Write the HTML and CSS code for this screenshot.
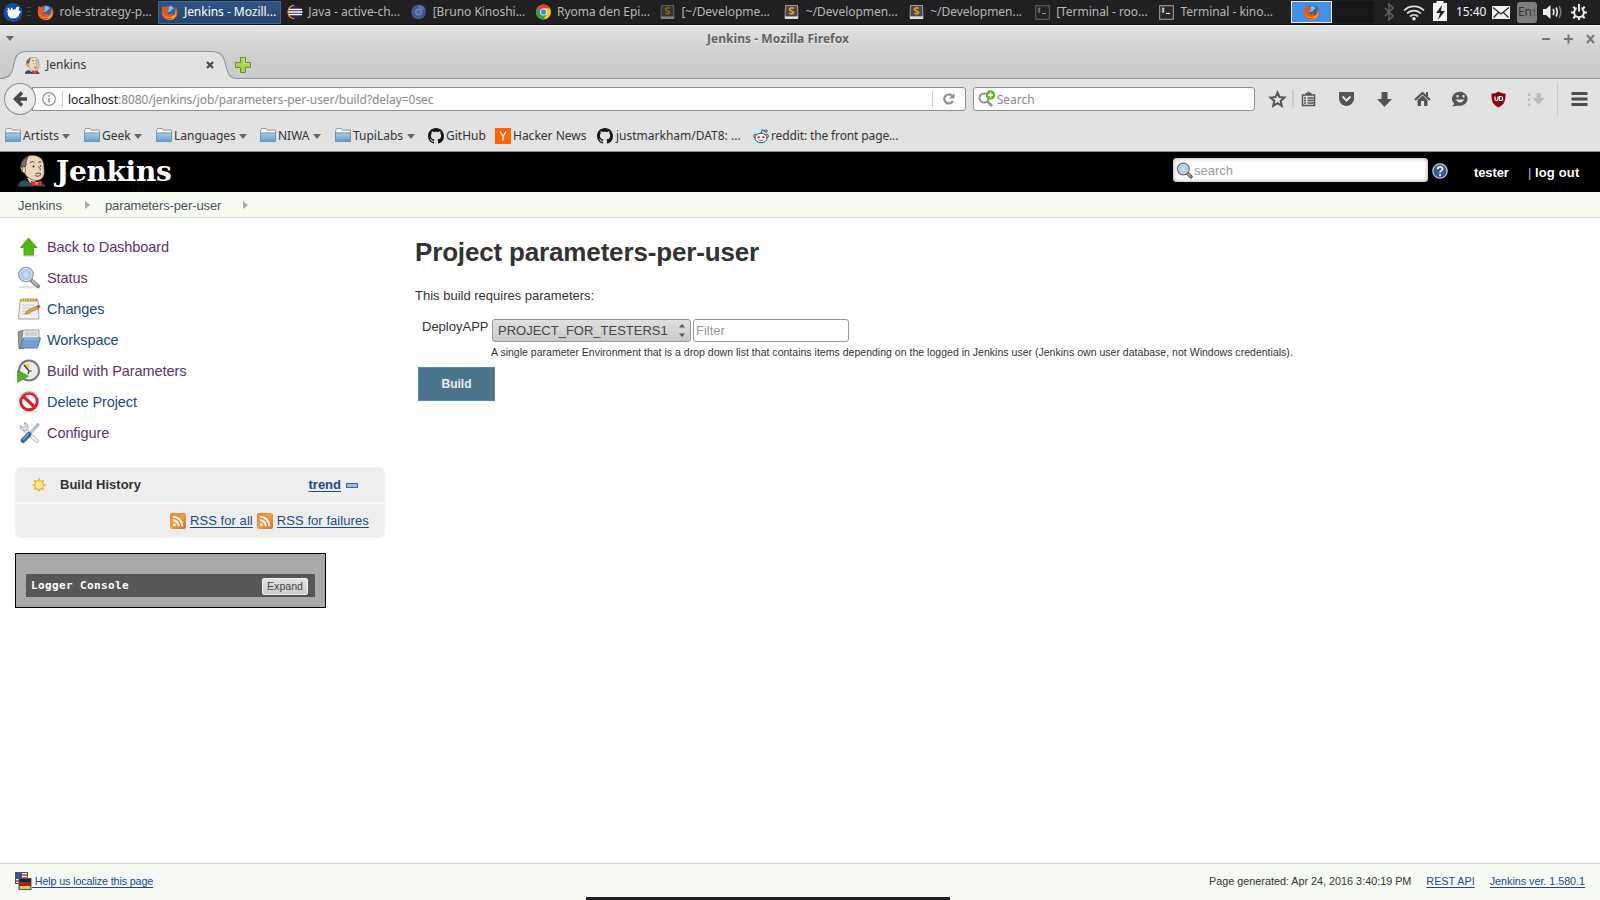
FILE: index.html
```html
<!DOCTYPE html>
<html lang="en">
<head>
<meta charset="utf-8">
<title>Jenkins</title>
<link rel="stylesheet" href="styles.css">
</head>
<body>
<svg class="defs" width="0" height="0">
  <defs>
    <linearGradient id="fold" x1="0" y1="0" x2="0" y2="1"><stop offset="0" stop-color="#a9cfe8"/><stop offset="1" stop-color="#5d9cc9"/></linearGradient>
    <linearGradient id="rssg" x1="0" y1="0" x2="1" y2="1"><stop offset="0" stop-color="#e8803a"/><stop offset=".5" stop-color="#f79a3c"/><stop offset="1" stop-color="#dc6b28"/></linearGradient>
    <linearGradient id="greeng" x1="0" y1="0" x2="0" y2="1"><stop offset="0" stop-color="#4fae1a"/><stop offset="1" stop-color="#58c800"/></linearGradient>
    <radialGradient id="lens"><stop offset="0" stop-color="#d8e9fb"/><stop offset="1" stop-color="#86b0e4"/></radialGradient>
    <radialGradient id="sung"><stop offset="0" stop-color="#fffbd0"/><stop offset="1" stop-color="#ffe04c"/></radialGradient>
  </defs>
  <symbol id="firefox" viewBox="0 0 17 17">
    <circle cx="9" cy="8.2" r="7" fill="#2f62ad"/><path d="M8 2c3 0 4 1 5 3-2-1-2 1-3 2s-3 0-4 2z" fill="#7fc0e8"/>
    <path d="M1.2 1.8 C2 3 3 3 4.2 3 C5 2.3 6 2 7.2 2.2 C6.5 3 6.3 3.8 6.8 4.5 C8 4.6 8.5 5 8.3 5.8 C7.3 6.3 6.8 6.8 6.6 7.6 C5.7 8.3 6 9.7 7.2 10.2 C8.8 11 10 9.6 11.2 9.8 C12.2 10 12 11 11 11.6 C13.8 11.3 14.6 8 13.6 5.6 C15.2 6.3 15.1 3.6 13 2 C16.3 4 17.2 7.6 16 11.2 C14.4 15.4 10.5 17 7 16 C2.8 15 .4 11.6 .8 7.4 C.9 5 1.4 4 1.2 1.8Z" fill="#e3571c"/>
    <path d="M1.5 8.2c1 3.2 4 5.4 7.5 4.9 4-.4 6-3.6 5.7-7 1.7 4 .4 8-3.4 9.1C6 16.4 1.9 13.4 1.5 8.2Z" fill="#f6a02a"/>
    <path d="M2 10c1.5 4 6.5 5.6 10 3.2-2.4 3.2-8.8 2.3-10-3.2Z" fill="#d93216"/>
  </symbol>
  <symbol id="subl" viewBox="0 0 14 14"><path d="M1 .5h12l.5 11.5H.5z" fill="#4b4b4b" stroke="#bdbdbd" stroke-width=".8"/><path d="M.3 11.5h13.4V14H.3z" fill="#ddd"/><path d="M9.3 3.2C7 2.3 4.8 3 5 4.5c.2 1.7 4 1.2 4.1 2.8.1 1.5-2.2 1.8-4.2.9" fill="none" stroke="#ff9a1f" stroke-width="1.7"/></symbol>
  <symbol id="term" viewBox="0 0 15 15"><rect x=".7" y=".7" width="13.6" height="13.6" fill="#292929" stroke="#a9a9a9" stroke-width="1"/><path d="M5.4 3.6C4 2.9 2.6 3.4 3.2 4.5c.4.6 2 .5 2 1.5S3.7 7.2 2.7 6.5M4.1 2.5v5.3" fill="none" stroke="#fff" stroke-width=".8"/><path d="M7 8.5h4" stroke="#fff"/></symbol>
  <symbol id="folder" viewBox="0 0 16 15"><path d="M.5 13.5V2.5l1-2h5l1 1.5h8v11.5z" fill="#e7eaec" stroke="#8f9ba3"/><path d="M2 1.5h4M1 3.5h14" stroke="#fff"/><path d="M.5 5h15v8.500H.5z" fill="url(#fold)" stroke="#6c98b5"/></symbol>
  <symbol id="octo" viewBox="0 0 16 16"><path fill="#191717" d="M8 0C3.580 0 0 3.580 0 8c0 3.540 2.290 6.530 5.470 7.590.4.070.55-.17.55-.38 0-.19-.01-.82-.01-1.490-2.010.37-2.530-.49-2.690-.94-.09-.23-.48-.94-.82-1.130-.28-.15-.68-.52-.01-.53.63-.01 1.080.58 1.230.82.72 1.210 1.870.87 2.330.66.07-.52.28-.87.51-1.070-1.780-.2-3.640-.89-3.640-3.950 0-.87.31-1.590.82-2.150-.08-.2-.36-1.020.08-2.120 0 0 .67-.21 2.200.82.64-.18 1.320-.27 2-.27s1.360.09 2 .27c1.530-1.040 2.200-.82 2.200-.82.44 1.100.16 1.920.08 2.120.51.56.82 1.270.82 2.150 0 3.070-1.870 3.750-3.650 3.950.29.25.54.73.54 1.480 0 1.070-.01 1.930-.01 2.200 0 .21.15.46.55.38A8.010 8.010 0 0 0 16 8c0-4.420-3.580-8-8-8z"/></symbol>
  <symbol id="butler" viewBox="0 0 28 32">
    <path d="M0 31.5C0 28 2 26 7 25l6 3 6-1c4 0 7 1 8.500 4.500z" fill="#335061" stroke="#1c2c38" stroke-width=".6"/>
    <path d="M9 23l3 5 5-1 3-4z" fill="#e9e4dc"/>
    <path d="M4.500 17C2 15 2 9 4.500 6 7 1.500 12-.2 17 .5c6 1 8.700 5 8.900 10 0 3 .8 6 .1 9-.7 4-4 6.300-8.300 6-4.200-.3-9.200-3-10.700-7z" fill="#f0d6b7" stroke="#3b2e25" stroke-width=".6"/>
    <path d="M3.600 12c-1-4 1.400-8 6.400-10-1.500 2.500-2.200 5-1.900 7.500L7 12c-1.800-1.500-3-1-3 .5z" fill="#77757a" stroke="#2a2a2a" stroke-width=".7"/>
    <path d="M4.500 12c2-1 3 0 3 3s-1 4-2.300 2.500c-1-1.200-1.500-3.500-.7-5.500z" fill="#f0d6b7" stroke="#3b2e25" stroke-width=".6"/>
    <path d="M12 8c1-1.800 3.500-1.800 4.500-.6M20 7.500c1.300-.9 2.700-.9 3.500 0M20.500 11.500c1.200 2 3 3.200 1.200 4M17 20.500c2 1.300 4.500.8 6-1M17.500 18.800c2-.8 4-.8 5.500 0" fill="none" stroke="#3b2e25" stroke-width=".9"/><circle cx="15.500" cy="11.500" r=".9" fill="#222"/><circle cx="22.500" cy="11" r=".8" fill="#222"/>
    <path d="M13 26l5 1.600 5.500-2.100.3 5.500-5.300-1.300-5 1.800z" fill="#e02f28" stroke="#9a1a1a" stroke-width=".4"/><rect x="17.300" y="27" width="2.400" height="2.800" fill="#f4817d"/>
  </symbol>
  <symbol id="rss" viewBox="0 0 16 16"><rect width="16" height="16" rx="2" fill="url(#rssg)"/><circle cx="4.300" cy="11.800" r="1.500" fill="#fff"/><path d="M2.800 7.200a6 6 0 0 1 6 6M2.800 3.600a9.600 9.600 0 0 1 9.600 9.600" fill="none" stroke="#fff" stroke-width="1.900"/></symbol>
  <symbol id="glass" viewBox="0 0 24 24"><ellipse cx="10" cy="21" rx="9" ry="1.500" fill="#e2e2e2"/><path d="M14.500 14.500l6.500 5.800" stroke="#858585" stroke-width="4" stroke-linecap="round"/><path d="M15 14.500l5.500 5" stroke="#c9c9c9" stroke-width="1.400"/><circle cx="9" cy="8.500" r="7.200" fill="url(#lens)" stroke="#9a9c99" stroke-width="1.300"/><circle cx="9" cy="8.500" r="6" fill="none" stroke="#eef3f8" stroke-width="1"/></symbol>
  <symbol id="glass-dark" viewBox="0 0 17 17"><path d="M11 11l4 3.800" stroke="#555" stroke-width="3.400" stroke-linecap="round"/><path d="M11 11l4 3.800" stroke="#bbb" stroke-width="1.300"/><circle cx="7.300" cy="7" r="5.800" fill="url(#lens)" stroke="#6c6c6a" stroke-width="1.400"/><circle cx="7.300" cy="7" r="4.700" fill="none" stroke="#e6eef8" stroke-width=".9"/></symbol>
</svg>

<div class="panel">
  <svg class="mouse" width="20" height="21" viewBox="0 0 21 21"><circle cx="10.500" cy="10.500" r="10" fill="#0e4fae"/><path d="M3.500 7.500L5 9l.5-1L4.500 6l1.500-.5L7.500 8h1L8 5.500h1.500L10.500 8c1-.6 2-.8 3-.8C13 5.500 14.500 4 16.500 4.500c1 1 .5 2.500-.7 3.500l2.200.8 1 1-2 2.200C16.500 15 14.500 16.500 12 16.500H8C5.500 15 4.500 12.500 5 10.500z" fill="#fff"/></svg>
  <i class="grip"></i>
  <div class="tasks">
    <div class="task"><svg width="17" height="17"><use href="#firefox"/></svg><span>role-strategy-p...</span></div>
    <div class="task on"><svg width="17" height="17"><use href="#firefox"/></svg><span>Jenkins - Mozill...</span></div>
    <div class="task"><svg width="16" height="16" viewBox="0 0 16 16"><path d="M8 1.500C3.500 1.500 1.500 5 1.500 8s2 6.500 6.500 6.500" fill="none" stroke="#f7941e" stroke-width="1.300"/><circle cx="9" cy="8" r="6.300" fill="#2c2255"/><path d="M2.500 5.500h13M2 8h14M2.500 10.500h13" stroke="#fff" stroke-width="1.400"/></svg><span>Java - active-ch...</span></div>
    <div class="task"><svg width="16" height="16" viewBox="0 0 16 16"><circle cx="8" cy="8" r="7.300" fill="#3f5890"/><path d="M8 .7a7.300 7.300 0 0 1 7 5H8z" fill="#566fa5"/><circle cx="8" cy="8" r="3" fill="#4e68a3" stroke="#8998b8"/></svg><span>[Bruno Kinoshi...</span></div>
    <div class="task"><svg width="16" height="16" viewBox="0 0 16 16"><circle cx="8" cy="8" r="7.500" fill="#fbc516"/><path d="M8 8L1.500 4.300A7.500 7.500 0 0 1 14.500 4.300H8z" fill="#df3e30"/><path d="M8 8L1.500 4.300A7.500 7.500 0 0 0 8 15.500l3-5z" fill="#2b9f4b"/><circle cx="8" cy="8" r="3.500" fill="#fff"/><circle cx="8" cy="8" r="2.700" fill="#3f86ee"/></svg><span>Ryoma den Epi...</span></div>
    <div class="task"><svg class="dim" width="14" height="14"><use href="#subl"/></svg><span>[~/Developme...</span></div>
    <div class="task"><svg width="14" height="14"><use href="#subl"/></svg><span>~/Developmen...</span></div>
    <div class="task"><svg width="14" height="14"><use href="#subl"/></svg><span>~/Developmen...</span></div>
    <div class="task late"><svg class="dim" width="15" height="15"><use href="#term"/></svg><span>[Terminal - roo...</span></div>
    <div class="task late"><svg width="15" height="15"><use href="#term"/></svg><span>Terminal - kino...</span></div>
  </div>
  <div class="pager"><b><svg width="17" height="17"><use href="#firefox"/></svg></b><i></i></div>
  <svg class="tray" width="68" height="24" viewBox="0 0 68 24"><path d="M4 8l8 8-4 4V4l4 4-8 8" fill="none" stroke="#666" stroke-width="1.400"/><path d="M23 10.500a14 14 0 0 1 20 0M26 13.500a10 10 0 0 1 14 0M29 16.500a6 6 0 0 1 8 0" fill="none" stroke="#dfdfdf" stroke-width="1.700"/><circle cx="33" cy="18.700" r="1.800" fill="#eee"/><path d="M52 3h3.500V1h7v2H66v18H52z" fill="#f5f5f5"/><path d="M61 5l-6 8h4l-2 7 7-9h-4z" fill="#222"/></svg>
  <span class="clock">15:40</span>
  <svg class="mail" width="18" height="13" viewBox="0 0 18 13"><rect width="18" height="13" fill="#f1f1f1"/><path d="M1 1.500l8 6.500 8-6.500M1.500 11.500l5-5M16.500 11.500l-5-5" fill="none" stroke="#222" stroke-width="1.200"/></svg>
  <span class="lang">En<small>1</small></span>
  <svg class="vol" width="20" height="16" viewBox="0 0 20 16"><path d="M0 5h3l4.500-4v14L3 11H0z" fill="#eee"/><path d="M10 5q1.800 3 0 6M13 3.500q2.600 4.500 0 9" fill="none" stroke="#eee" stroke-width="1.600"/><path d="M16 2q3.600 6 0 12" fill="none" stroke="#777" stroke-width="1.600"/></svg>
  <svg class="gear" width="16" height="16" viewBox="0 0 16 16"><circle cx="8" cy="8.500" r="4.800" fill="none" stroke="#eee" stroke-width="2"/><path d="M2.300 2.800l2 2M13.700 2.800l-2 2M0 8.500h3M13 8.500h3M2.300 14.200l2-2M13.700 14.200l-2-2M8 13.500V16" stroke="#eee" stroke-width="2.200"/><path d="M5.700 1h4.600v6H5.700z" fill="#202022"/><path d="M8 0v7.500" stroke="#eee" stroke-width="1.900"/></svg>
</div>

<div class="titlebar">
  <svg class="wmenu" width="8" height="5"><path d="M0 0h8L4 5z" fill="#6a6a6a"/></svg>
  <span class="wtitle">Jenkins - Mozilla Firefox</span>
  <svg class="wbtns" width="54" height="10" viewBox="0 0 54 10"><path d="M0 5h8M22 5h9M26.500 .5v9" stroke="#777" stroke-width="2"/><path d="M45 1l7 8M52 1l-7 8" stroke="#777" stroke-width="2"/></svg>
</div>
<div class="tabs">
  <svg class="tabshape" width="240" height="29" viewBox="0 0 240 29"><path d="M0 27.500C9 27.500 12 23 13.500 15 15 6 17 .5 27 .5H211C222 .5 224 6 226 15 228 24 230 27.500 238 27.500H240V29H0z" fill="#e2e2e2"/><path d="M0 27.500C9 27.500 12 23 13.500 15 15 6 17 .5 27 .5H211C222 .5 224 6 226 15 228 24 230 27.500 238 27.500H240" fill="none" stroke="#8f9499" stroke-width="1.100"/></svg>
  <div class="tab"><svg width="15" height="17"><use href="#butler"/></svg><span>Jenkins</span><svg class="x" width="8" height="8" viewBox="0 0 8 8"><path d="M1 1l6 6M7 1L1 7" stroke="#4b4b4b" stroke-width="2.200"/></svg></div>
  <svg class="plus" width="16" height="16" viewBox="0 0 16 16"><path d="M5.500.5h5v5h5v5h-5v5h-5v-5h-5v-5h5z" fill="#a9d14c" stroke="#63952c"/><path d="M6.700 1.700h2.600v5h5" fill="none" stroke="#cfe78e"/></svg>
</div>
<div class="nav">
  <div class="back"><svg width="14" height="16" viewBox="0 0 14 16"><path d="M9 1.500L2.500 8 9 14.500M3 8h11" fill="none" stroke="#4a4a4a" stroke-width="3.600"/></svg></div>
  <div class="url">
    <svg width="14" height="14" viewBox="0 0 14 14"><circle cx="7" cy="7" r="6.300" fill="none" stroke="#929292" stroke-width="1.200"/><path d="M7 6v4.500M7 3.200v1.600" stroke="#929292" stroke-width="1.600"/></svg>
    <i></i><span><b>localhost</b>:8080/jenkins/job/parameters-per-user/build?delay=0sec</span><i class="end"></i>
    <svg class="reload" width="12" height="12" viewBox="0 0 12 12"><path d="M9.800 8A4.500 4.500 0 1 1 8.800 2.600" fill="none" stroke="#8a939c" stroke-width="2.200"/><path d="M11.500 0v5.500H6z" fill="#8a939c"/></svg>
  </div>
  <div class="find"><svg width="18" height="18" viewBox="0 0 18 18"><circle cx="6" cy="8" r="4.500" fill="none" stroke="#979797" stroke-width="2"/><path d="M9 11l5 5" stroke="#979797" stroke-width="2.600"/><circle cx="12.500" cy="5" r="4.700" fill="#5bb71d"/><path d="M12.500 2.300v5.400M9.800 5h5.400" stroke="#fff" stroke-width="1.500"/></svg><span>Search</span></div>
  <svg class="tools" width="340" height="36" viewBox="0 0 340 36" fill="none" stroke="#545454" stroke-width="2">
    <path d="M17.500 11.500l2 4.600 5 .5-3.800 3.300 1.100 5-4.300-2.700-4.300 2.700 1.100-5-3.800-3.300 5-.5z"/>
    <path d="M33 9v18" stroke="#b8b8b8" stroke-width="1"/>
    <path d="M42.500 14h12v10.500h-12zM45.500 12.500h6M48.500 10.500v2M44 17h2M47.500 17h6M44 19.500h2M47.500 19.500h6M44 22h2M47.500 22h6" stroke-width="1.500"/>
    <path d="M79 11h15v6c0 4-3 8-7.500 8S79 21 79 17z" fill="#545454" stroke="none"/><path d="M82.500 15.500l4 4 4-4" stroke="#e2e2e2"/>
    <path d="M121.500 11h6v7h4.500l-7.500 8-7.500-8h4.500z" fill="#545454" stroke="none"/>
    <path d="M155 19l7.500-7 7.500 7" stroke-width="2.300"/><path d="M157.500 19l5-4.500 5 4.500v6h-3.500v-5h-3v5h-3.500zM166 11h2v4h-2z" fill="#545454" stroke="none"/>
    <path d="M192 25c2-1 2-2 2-2.500a7.800 7 0 1 1 3.500 2c-1.500.8-3.500 1-5.500.5z" fill="#545454" stroke="none"/><path d="M195.500 18.500q4.500 6 9 0z" fill="#e2e2e2" stroke="none"/><path d="M197.500 14v2.500M203.500 14v2.500" stroke="#e2e2e2"/>
    <path d="M231.500 12.500c3 0 5-.5 7-2 2 1.500 4 2 7 2 0 7-.5 10.500-7 14-6.500-3.500-7-7-7-14z" fill="#8b0000" stroke="none"/><path d="M235 15.500v2.500c0 2 3 2 3 0v-2.500M239.500 15.500h1.300c2.500 0 2.500 4 0 4h-1.300z" stroke="#fff" stroke-width="1.200"/>
    <path d="M276.500 12h4v5h4l-6 7-6-7h4z" fill="#bbb" stroke="none"/><path d="M269 12.500v13" stroke="#bdbdbd" stroke-width="2.500" stroke-dasharray="2.500 2.500"/>
    <path d="M297.500 1v34" stroke="#cacaca" stroke-width="1"/>
    <path d="M311.500 12.500h16M311.500 18h16M311.500 23.500h16" stroke="#4b4b4b" stroke-width="3"/>
  </svg>
</div>
<div class="marks">
  <a style="width:79px"><svg width="16" height="15"><use href="#folder"/></svg><span>Artists</span><i></i></a>
  <a style="width:72px"><svg width="16" height="15"><use href="#folder"/></svg><span>Geek</span><i></i></a>
  <a style="width:104px"><svg width="16" height="15"><use href="#folder"/></svg><span>Languages</span><i></i></a>
  <a style="width:75px"><svg width="16" height="15"><use href="#folder"/></svg><span>NIWA</span><i></i></a>
  <a style="width:93px"><svg width="16" height="15"><use href="#folder"/></svg><span>TupiLabs</span><i></i></a>
  <a style="width:67px"><svg width="16" height="16"><use href="#octo"/></svg><span>GitHub</span></a>
  <a style="width:102px"><svg width="16" height="16" viewBox="0 0 16 16"><path d="M0 0h16v16H0z" fill="#f60"/><path d="M5 3.500l3 5 3-5M8 8v4.500" fill="none" stroke="#fff" stroke-width="1.300"/></svg><span>Hacker News</span></a>
  <a class="wide" style="width:156px"><svg width="16" height="16"><use href="#octo"/></svg><span>justmarkham/DAT8: ...</span></a>
  <a><svg width="16" height="16" viewBox="0 0 16 16"><path d="M0 0h16v16H0z" fill="#cee3f8"/><path d="M8 6l1-4 3.500 1" fill="none" stroke="#333" stroke-width=".9"/><g fill="#fff" stroke="#333" stroke-width=".9"><circle cx="13" cy="3" r="1.200"/><circle cx="2.300" cy="8" r="1.600"/><circle cx="13.700" cy="8" r="1.600"/><ellipse cx="8" cy="10" rx="6" ry="4.700"/></g><circle cx="5.700" cy="9.200" r="1.200" fill="#f22"/><circle cx="10.300" cy="9.200" r="1.200" fill="#f22"/><path d="M5.500 12q2.500 1.500 5 0" fill="none" stroke="#333" stroke-width=".8"/></svg><span class="reddit">reddit: the front page...</span></a>
</div>

<header class="jhead">
  <svg class="logo" width="28" height="32"><use href="#butler"/></svg>
  <span class="word">Jenkins</span>
  <div class="jsearch"><svg width="17" height="17"><use href="#glass-dark"/></svg><span>search</span></div>
  <svg class="help" width="16" height="16" viewBox="0 0 16 16"><circle cx="8" cy="8" r="7.200" fill="#33599c" stroke="#c7d3e8" stroke-width="1.200"/><path d="M5.600 6.300C5.700 3 10.700 3.200 10.500 6c-.1 1.600-2.500 1.700-2.400 3.600" fill="none" stroke="#fff" stroke-width="1.800"/><circle cx="8.100" cy="12" r="1.100" fill="#fff"/></svg>
  <b class="user">tester</b><span class="bar">|</span><b class="out">log out</b>
</header>
<nav class="crumbs"><span class="c1">Jenkins</span><i></i><span class="c2">parameters-per-user</span><i></i></nav>

<div class="page">
  <aside>
    <a class="v"><svg width="24" height="24" viewBox="0 0 24 24"><ellipse cx="12" cy="20.500" rx="8" ry="1.500" fill="#e2e2e2"/><path d="M11.500 3l8.500 9.500h-3.500V20h-9.500v-7.500H3.500z" fill="url(#greeng)" stroke="#4d9a1c" stroke-width=".9"/></svg><span>Back to Dashboard</span></a>
    <a class="v"><svg width="24" height="24"><use href="#glass"/></svg><span>Status</span></a>
    <a><svg width="24" height="24" viewBox="0 0 24 24"><path d="M3 3h18l1 19H1.500z" fill="#efefed" stroke="#a5a5a0"/><path d="M3.500 1.500h17v3h-17z" fill="#b49a3c"/><path d="M5 1v3M7.500 1v3M10 1v3M12.500 1v3M15 1v3M17.500 1v3" stroke="#efdc8c" stroke-width=".8"/><path d="M5 8h12M5 11h9M5 14h5M5 17h10" stroke="#c4c4c4"/><path d="M8 17l2-3L20 9l1.500 2.500-10 4.500z" fill="#e8a33d" stroke="#8c5a18" stroke-width=".6"/><path d="M19.500 9l3-1 1.200 1.700-2.200 1.800z" fill="#d8432f"/></svg><span>Changes</span></a>
    <a><svg width="24" height="24" viewBox="0 0 24 24"><path d="M1 4l3-1.500h3v18L2 21z" fill="#969696" stroke="#6c6c6c" stroke-width=".7"/><path d="M6 2h16v10H5z" fill="#e9e9e9" stroke="#8d8d8d" stroke-width=".8"/><path d="M8 5h12M8 7h12" stroke="#bbb"/><path d="M6.500 10H23.500L20.500 20H3z" fill="#71a0d5" stroke="#3d6ca5" stroke-width=".8"/><path d="M7 11h15" stroke="#a9c8ec"/></svg><span>Workspace</span></a>
    <a class="v"><svg width="24" height="24" viewBox="0 0 24 24"><circle cx="12" cy="11.500" r="10" fill="#ecebe4" stroke="#77758f" stroke-width="2"/><path d="M12 12V4L6.500 6.500z" fill="#e8cf55"/><path d="M7 6l5 6h2.500M12 12l-1 3" fill="none" stroke="#333" stroke-width="1.200"/><path d="M.5 11.500l11 5.500-11 6.500z" fill="#4fb31b" stroke="#3a8a14" stroke-width=".6"/></svg><span>Build with Parameters</span></a>
    <a><svg width="24" height="24" viewBox="0 0 24 24"><ellipse cx="12" cy="21.500" rx="8" ry="1" fill="#ddd"/><circle cx="12" cy="11.500" r="8.300" fill="#fff" stroke="#d8252b" stroke-width="3"/><path d="M6 6l12 11.500" stroke="#d8252b" stroke-width="3.200"/><path d="M3.500 8a9 9 0 0 1 17 0" fill="none" stroke="#ee8a86" stroke-width="1.300"/></svg><span>Delete Project</span></a>
    <a class="v"><svg width="24" height="24" viewBox="0 0 24 24"><path d="M7 8l13 12" stroke="#b3b6b2" stroke-width="4" stroke-linecap="round"/><path d="M7 8l13 12" stroke="#eceeec" stroke-width="2.400" stroke-linecap="round"/><path d="M3 4.500c0 6 7 7 8 2 .5-3-1.500-5-4-5l1.500 3-2 2z" fill="#dfe1df" stroke="#9b9e9b" stroke-width=".8"/><path d="M12 12l6-7 2-2.500 2 .5-.5 2.500-8 7.500z" fill="#bccbdc" stroke="#8295ab" stroke-width=".6"/><path d="M12 13.500L6 19.500" stroke="#3669a8" stroke-width="5" stroke-linecap="round"/><path d="M11.500 13L6 18.500" stroke="#7ba3d4" stroke-width="1.200"/></svg><span>Configure</span></a>
    <section class="hist">
      <div class="hrow"><svg class="sun" width="16" height="16" viewBox="0 0 16 16"><path d="M8 .8l1.400 3 3.500-.7-.7 3.500 3 1.400-3 1.400.7 3.500-3.500-.7L8 15.200l-1.400-3-3.500.7.7-3.500L.8 8l3-1.400-.7-3.500 3.500.7z" fill="#f6a82e"/><circle cx="8" cy="8" r="4.400" fill="url(#sung)" stroke="#f3b33c" stroke-width=".6"/></svg><b>Build History</b><a class="trend">trend</a><i></i></div>
      <div class="hrow rss"><svg width="16" height="16"><use href="#rss"/></svg><a>RSS for all</a><svg width="16" height="16"><use href="#rss"/></svg><a>RSS for failures</a></div>
    </section>
    <section class="logger"><div><b>Logger Console</b><button>Expand</button></div></section>
  </aside>
  <main>
    <h1><span>Project parameters-per-user</span></h1>
    <p><span>This build requires parameters:</span></p>
    <div class="param"><span class="lab">DeployAPP</span><div class="sel"><span>PROJECT_FOR_TESTERS1</span><svg width="6" height="13" viewBox="0 0 6 13"><path d="M0 3.500l3-3.500 3 3.500zM0 9.500h6l-3 3.500z" fill="#555"/></svg></div><div class="filter"><span>Filter</span></div></div>
    <div class="desc"><span>A single parameter Environment that is a drop down list that contains items depending on the logged in Jenkins user (Jenkins own user database, not Windows credentials).</span></div>
    <button class="build"><span>Build</span></button>
  </main>
</div>
<footer>
  <svg width="17" height="18" viewBox="0 0 17 18"><rect x=".5" y=".5" width="12" height="11" fill="#fff" stroke="#555"/><path d="M6 3h6M6 6h6M1 9h11" stroke="#d22" stroke-width="1.500"/><path d="M1 1h6v6H1z" fill="#2d55a5"/><rect x="4" y="6.500" width="12" height="11" fill="#222" stroke="#555"/><path d="M4.500 10h11v4h-11z" fill="#a82320"/><path d="M4.500 14h11v3h-11z" fill="#e5cb45"/></svg>
  <a class="loc">&nbsp;Help us localize this page</a>
  <span class="gen">Page generated: Apr 24, 2016 3:40:19 PM</span><a class="rest">REST API</a><a class="ver">Jenkins ver. 1.580.1</a>
</footer>
<i class="edge"></i>
</body>
</html>
```

FILE: styles.css
```css
* { box-sizing: border-box; }
html, body { height: 900px; overflow: hidden; }
body { margin: 0; display: flex; flex-direction: column; background: linear-gradient(#e2e2e2 151px, #fff 151px); font: 13px/16px "Liberation Sans", sans-serif; color: #333; }
svg { display: block; flex: none; }
span, a, b { white-space: nowrap; }
.defs { position: absolute; }

.panel { height: 25px; flex: none; display: flex; align-items: center; background: #202022; border-bottom: 1px solid #111; color: #b9b9b4; font: 12px/24px "Noto Sans", sans-serif; }
.mouse { margin-left: 3px; }
.grip { width: 4px; height: 10px; margin-left: 4px; background: repeating-linear-gradient(#444 0 1px, transparent 1px 4px); }
.tasks { display: flex; margin-left: 3px; width: 1246px; }
.task { flex: none; width: 124.4px; display: flex; align-items: center; height: 23px; }
.task svg { width: 17px; margin-left: 3px; }
.task span { margin-left: 5.5px; letter-spacing: -.03px; }
.task.late svg { margin-left: 4.5px; }
.task.on { background: linear-gradient(#2f5585, #25456e); background-clip: padding-box; box-shadow: inset 0 0 0 1px #3a699f; border-right: 2px solid #202022; color: #fff; }
.dim { opacity: .5; }
.pager { display: flex; margin-left: 11px; }
.pager b { width: 41px; height: 22px; border: 1px solid #eee; background: #4191ea; display: flex; align-items: center; justify-content: center; }
.pager i { width: 42px; height: 22px; background: #18181a; }
.tray { margin-left: 7px; }
.clock { margin-left: 7px; width: 36px; color: #eef4fb; letter-spacing: -.1px; }
.lang { margin-left: 7px; width: 20px; height: 21px; border-radius: 3px; background: #7d7d7d; color: #333; line-height: 20px; font-size: 12px; letter-spacing: -.2px; padding-left: 1px; }
.lang small { font-size: 8px; }
.vol { margin-left: 6px; }
.gear { margin-left: 8px; }

.titlebar { height: 26px; flex: none; display: flex; align-items: center; background: linear-gradient(#e4e4e4, #cfcfcf); border-top: 1px solid #f6f6f6; font: bold 12px/24px "Noto Sans", sans-serif; letter-spacing: .05px; color: #626262; text-shadow: 0 1px #eee; }
.wmenu { margin-left: 6px; }
.wtitle { margin-left: 693px; }
.wbtns { margin-left: auto; margin-right: 4px; }
.tabs { height: 29px; flex: none; position: relative; display: flex; background: linear-gradient(#cfcfcf, #cbcbcb 27px, #8f9499 27px 28px, #eee 28px); font: 12px/17px "Noto Sans", sans-serif; color: #333; }
.tabshape { position: absolute; left: 0; top: 0; }
.tab { position: relative; display: flex; align-items: center; width: 235px; padding-left: 25px; height: 28px; }
.tab span { margin-left: 6px; padding-bottom: 2px; }
.x { margin-left: auto; margin-right: 21px; }
.plus { margin-top: 6px; }
.nav { height: 36px; flex: none; margin-top: 1px; display: flex; align-items: center; font: 12px/20px "Noto Sans", sans-serif; }
.back { position: relative; z-index: 1; width: 32px; height: 32px; margin-left: 4px; border-radius: 50%; border: 1px solid #8b8b8b; background: #ebebeb; display: flex; align-items: center; justify-content: center; }
.url { display: flex; align-items: center; width: 936px; height: 24px; margin-left: -4px; padding-left: 9px; border: 1px solid #8f8f8f; border-radius: 0 3px 3px 0; background: #fcfcfc; color: #8b8b8b; letter-spacing: -.065px; }
.url span, .find span { padding-top: 2px; }
.url b { font-weight: normal; color: #222; }
.url i { width: 1px; height: 16px; margin: 0 5px 0 6px; background: #cbcbcb; }
.url i.end { margin: 0 10px 0 auto; }
.reload { margin-right: 10px; }
.find { display: flex; align-items: center; width: 283px; height: 24px; margin-left: 7px; padding-left: 4px; border: 1px solid #8f8f8f; border-radius: 3px; background: #fcfcfc; color: #8b8b8b; }
.find span { margin-left: 1px; }
.tools { margin-left: 5px; }
.marks { height: 34px; flex: none; display: flex; align-items: center; padding: 3px 0 0 5px; font: 12px/20px "Noto Sans", sans-serif; color: #333; }
.marks a { display: flex; align-items: center; }
.marks span { margin-left: 2px; }
.marks .wide span { margin-left: 3px; }
.reddit { letter-spacing: -.13px; }
.marks i, .crumbs i { width: 0; height: 0; border: 4px solid transparent; }
.marks i { border-top: 5px solid #666; border-bottom: 0; margin: 1px 0 0 3.5px; }

.jhead { height: 41px; flex: none; border-top: 1px solid #8f8f8f; background: #000; color: #fff; display: flex; }
.logo { margin: 3px 0 0 18px; }
.word { font: bold 28px/36px "DejaVu Serif", serif; letter-spacing: -.3px; margin-left: 10px; width: 1117px; padding-top: 2px; }
.jsearch { display: flex; align-items: center; width: 255px; height: 24px; margin-top: 6px; padding-left: 3px; border-radius: 4px; background: #fff; box-shadow: inset 0 0 4px #999; color: #999; }
.jsearch span { margin-left: 1px; padding-top: 1px; }
.help { margin: 11px 0 0 4px; }
.user, .bar, .out { margin-top: 13px; }
.user { margin-left: 26px; width: 54px; letter-spacing: -.1px; }
.bar { width: 7px; color: #bbb; }
.out { letter-spacing: .15px; }
.crumbs { height: 26px; flex: none; display: flex; align-items: center; background: #f6faf2; border-bottom: 1px solid #d3d7cf; padding-left: 18px; color: #4d545d; }
.crumbs span { padding-top: 2px; }
.crumbs i { border-left: 5px solid #aaa; border-right: 0; }
.c1 { width: 67px; }
.c1 + i { margin-right: 15px; }
.c2 { width: 138px; letter-spacing: -.12px; }

.page { flex: 1; display: flex; background: #fff; }
aside { width: 415px; padding: 13px 0 0 15px; }
aside > a { display: flex; align-items: center; height: 31px; padding-left: 2px; font-size: 14.5px; letter-spacing: -.08px; color: #204a87; }
aside > a.v { color: #5c3566; }
aside > a span { margin-left: 6px; }
.hist { margin-top: 19px; width: 370px; height: 71px; border-radius: 5px; background: #eee; border: 1px solid #f2f2f2; color: #333; }
.hrow { height: 36px; display: flex; align-items: center; padding-left: 15px; border-bottom: 2px solid #f8f8f8; }
.sun { margin-right: 13px; }
.hist a { color: #204a87; text-decoration: underline; text-underline-offset: 2px; }
.trend { font-weight: bold; margin-left: auto; }
.hrow i { width: 12px; height: 5px; border: 1px solid #3465a4; background: #9dbfe0; margin: 1px 26px 0 5px; }
.rss { border: 0; height: 33px; padding-left: 154px; }
.rss a { margin: 0 4px; letter-spacing: .06px; }
.logger { margin-top: 15px; width: 311px; height: 55px; border: 1px solid #000; background: #a9a9a9; padding: 20px 10px; }
.logger div { height: 23px; background: #575757; color: #fff; display: flex; align-items: center; padding-left: 5px; font: bold 11px/16px "DejaVu Sans Mono", monospace; letter-spacing: .38px; }
.logger button { margin: 2px 7px 0 auto; width: 46px; height: 17px; padding: 0 0 1px; border: 1px solid #eee; border-radius: 2px; background: linear-gradient(#e2e2e2, #ccc); font: 10.6px/13px "Liberation Sans", sans-serif; color: #444; }
main h1 { margin: 19px 0 0; font: bold 26px/30px "Liberation Sans", sans-serif; letter-spacing: -.16px; color: #333; }
main p { margin: 21px 0 0; }
.param { display: flex; margin-top: 15px; height: 23px; padding-left: 7px; }
.lab { width: 70px; }
.sel { display: flex; align-items: center; width: 199px; height: 23px; padding: 0 5px; border: 1px solid #999; border-radius: 3px; background: linear-gradient(#e0e0e0, #c9c9c9); color: #444; }
.sel svg { margin-left: auto; }
.filter { width: 156px; height: 23px; margin-left: 2px; padding: 3px 2px; border: 1px solid #999; border-radius: 3px; color: #999; }
.desc { margin: 3px 0 0 76px; font-size: 10.5px; line-height: 14px; letter-spacing: .02px; }
.build { display: block; margin: 8px 0 0 3px; width: 77px; height: 34px; border: 1px solid #5788a1; background: #4b758b; color: #eee; font: bold 12px/16px "Liberation Sans", sans-serif; }
footer { height: 37px; flex: none; display: flex; align-items: center; padding: 0 0 2px 15px; border-top: 1px solid #d3d7cf; background: #f6faf2; font-size: 10.8px; }
footer a { color: #204a87; text-decoration: underline; text-underline-offset: 2px; }
.loc { letter-spacing: -.16px; }
.gen { margin-left: auto; margin-right: 15px; }
.rest { margin-right: 15px; }
.ver { margin-right: 15px; letter-spacing: -.04px; }
.edge { position: absolute; left: 586px; top: 897px; width: 364px; height: 3px; background: #222; }
```
